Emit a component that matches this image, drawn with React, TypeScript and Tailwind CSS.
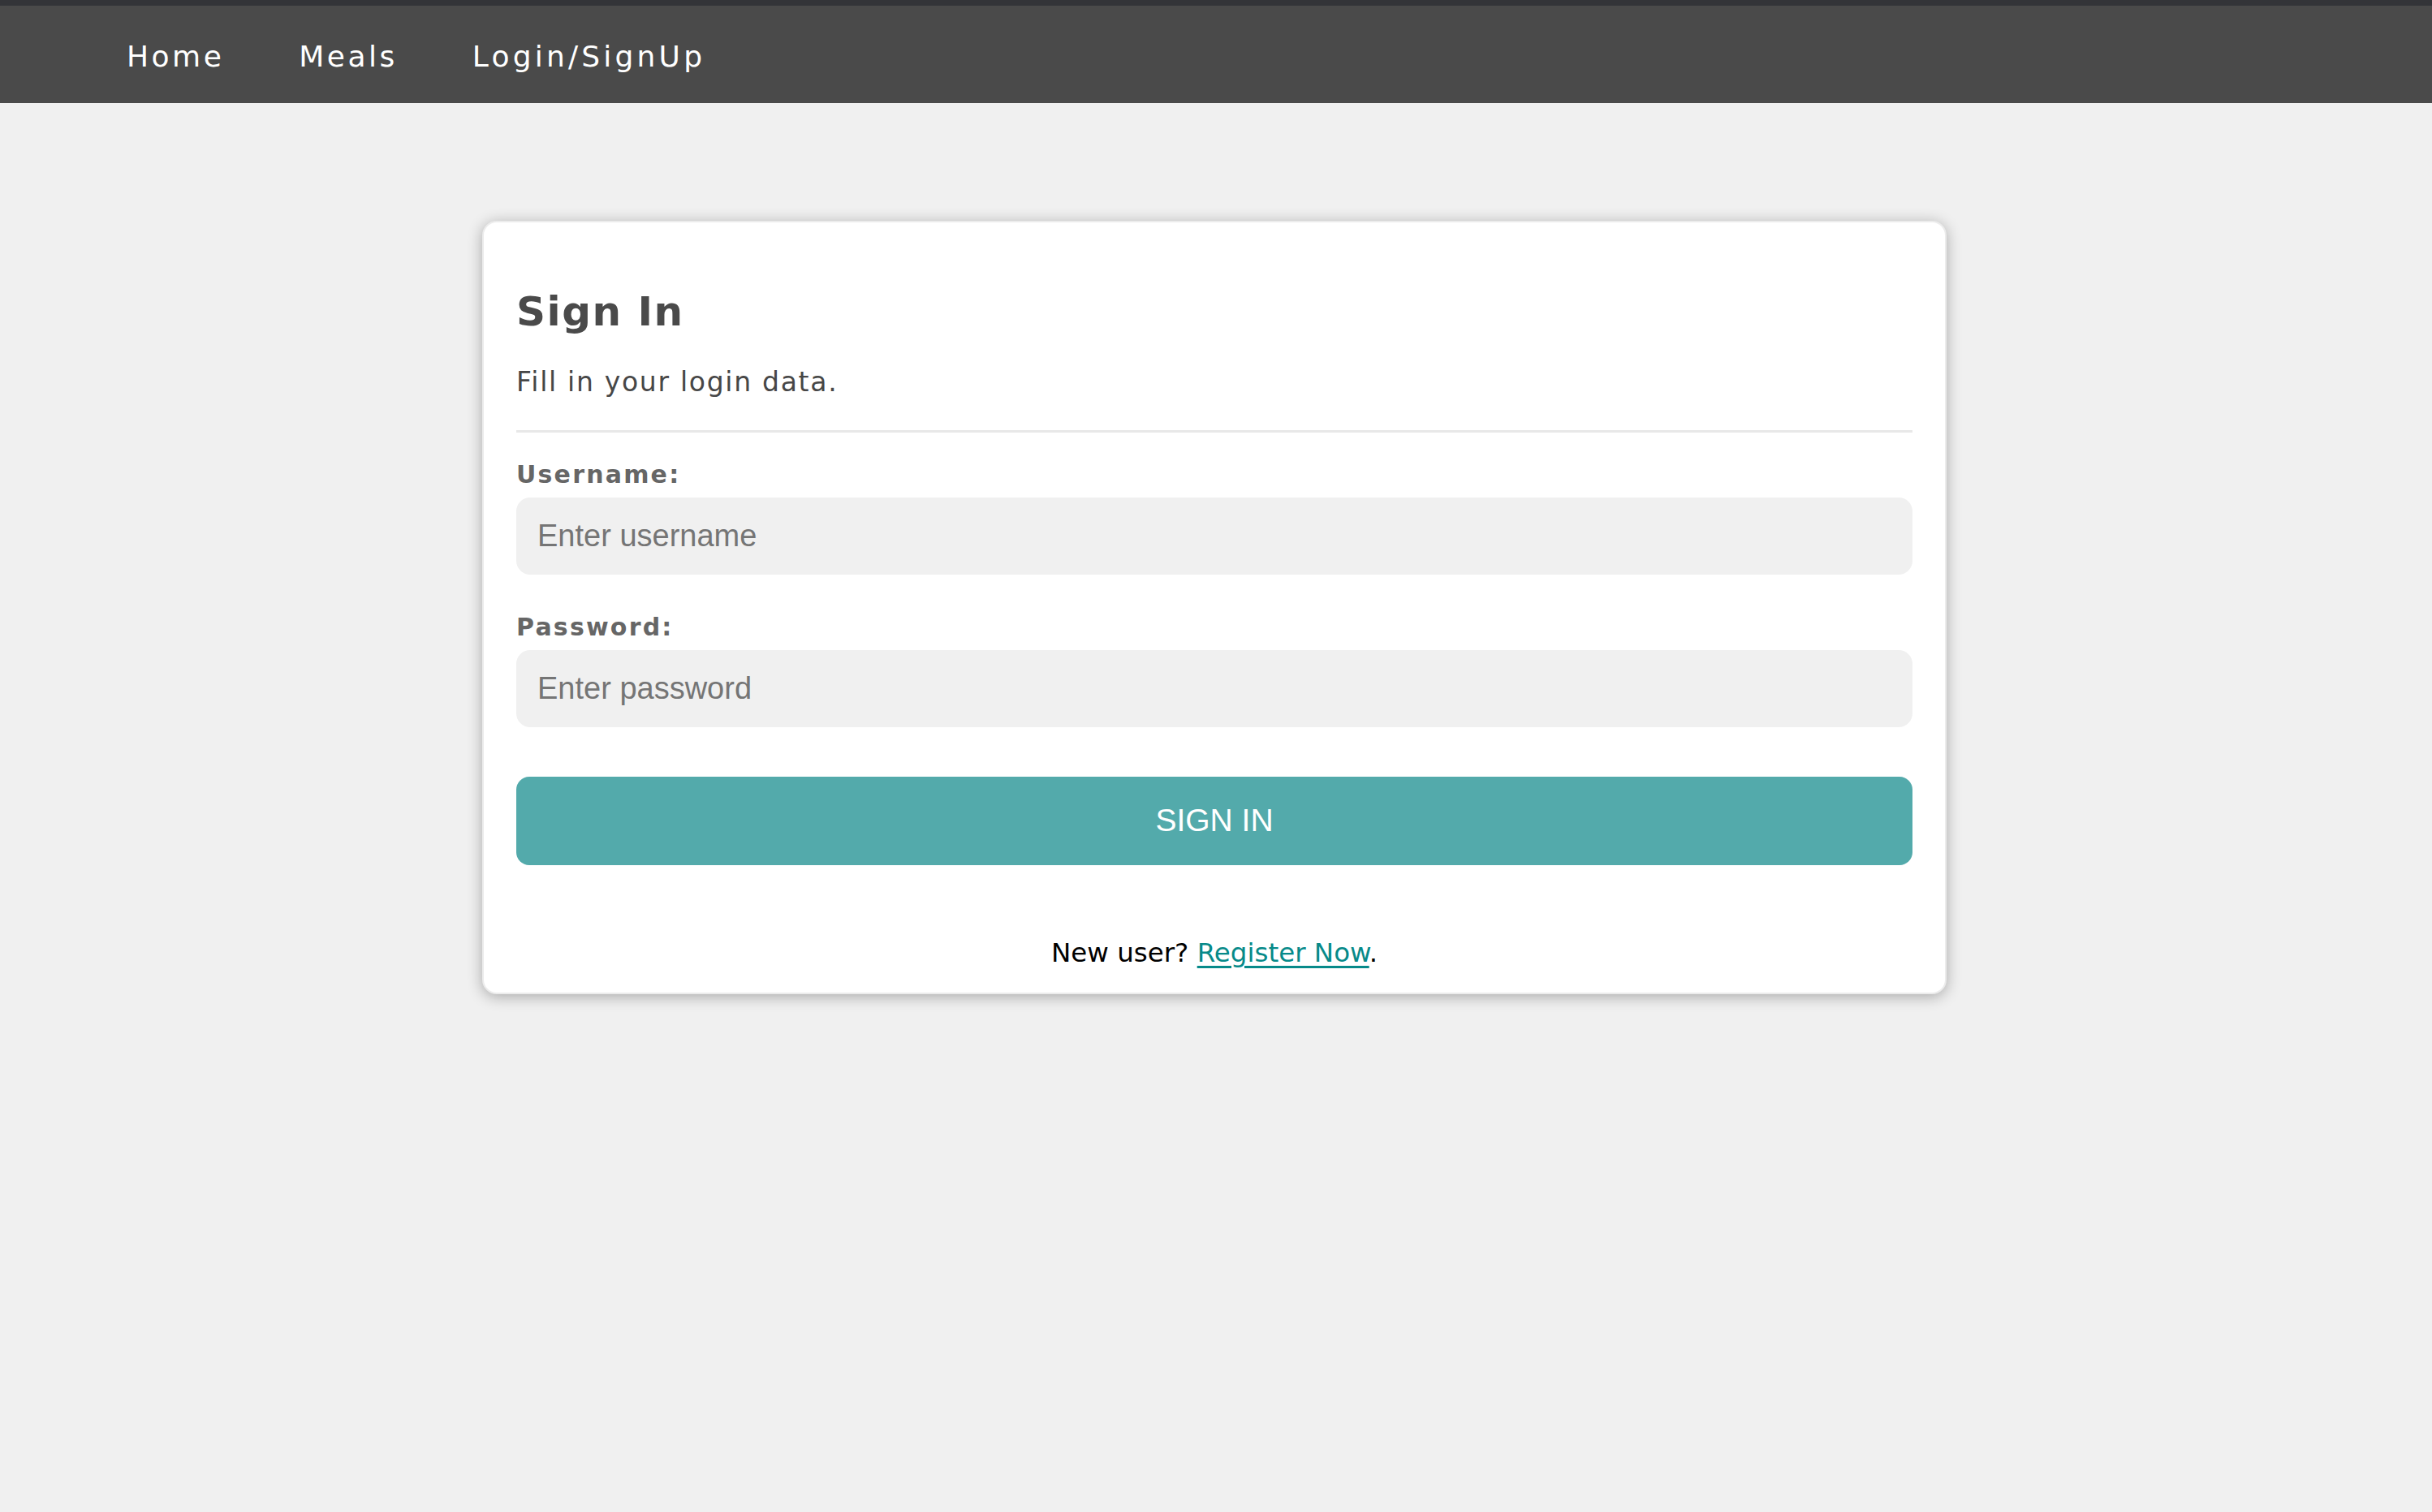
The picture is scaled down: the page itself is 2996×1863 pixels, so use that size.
import React from "react";

export default function App() {
  return (
    <div className="min-h-[1863px] w-full bg-[#f0f0f0] font-['DejaVu_Sans',_Verdana,_sans-serif]">
      <nav className="border-t-[7px] border-[#333438] bg-[#4a4a4a]">
        <ul className="flex h-[120px] items-center gap-[92px] pl-[156px] pt-[6px]">
          <li><a href="#" className="text-[36px] leading-[42px] tracking-[3.5px] text-white">Home</a></li>
          <li><a href="#" className="text-[36px] leading-[42px] tracking-[3.5px] text-white">Meals</a></li>
          <li><a href="#" className="text-[36px] leading-[42px] tracking-[4.2px] text-white">Login/SignUp</a></li>
        </ul>
      </nav>

      <div className="mx-auto mt-[145px] w-[1804px] -translate-x-[2px] rounded-[18px] border-2 border-[#ececec] bg-white px-[40px] pb-[30px] pt-[81px] shadow-[0_3px_18px_rgba(0,0,0,0.3)]">
        <h1 className="text-[50px] font-bold leading-[58px] tracking-[1.5px] text-[#4a4a4a]">Sign In</h1>
        <p className="mt-[39px] text-[33px] leading-[38px] tracking-[1.7px] text-[#474747]">Fill in your login data.</p>
        <div className="mt-[40px] h-[3px] bg-[#e8e8e8]" />

        <label className="mt-[34px] block text-[30px] font-bold leading-[35px] tracking-[2.2px] text-[#666666]">Username:</label>
        <input
          type="text"
          placeholder="Enter username"
          className="mt-[11px] block h-[95px] w-full rounded-[17px] bg-[#f0f0f0] px-[26px] font-['Liberation_Sans',_Arial,_sans-serif] text-[38px] text-[#333] outline-none placeholder:text-[#757575]"
        />

        <label className="mt-[47px] block text-[30px] font-bold leading-[35px] tracking-[2.2px] text-[#666666]">Password:</label>
        <input
          type="password"
          placeholder="Enter password"
          className="mt-[11px] block h-[95px] w-full rounded-[17px] bg-[#f0f0f0] px-[26px] font-['Liberation_Sans',_Arial,_sans-serif] text-[38px] text-[#333] outline-none placeholder:text-[#757575]"
        />

        <button
          type="button"
          className="mt-[61px] block h-[109px] w-full rounded-[16px] bg-[#53aaab] font-['Liberation_Sans',_Arial,_sans-serif] text-[39px] text-white"
        >
          SIGN IN
        </button>

        <p className="mt-[90px] text-center text-[32.5px] leading-[37px] text-black">
          New user? <a href="#" className="text-[#078a8a] underline decoration-[3px] underline-offset-[5px]">Register Now</a>.
        </p>
      </div>
    </div>
  );
}
